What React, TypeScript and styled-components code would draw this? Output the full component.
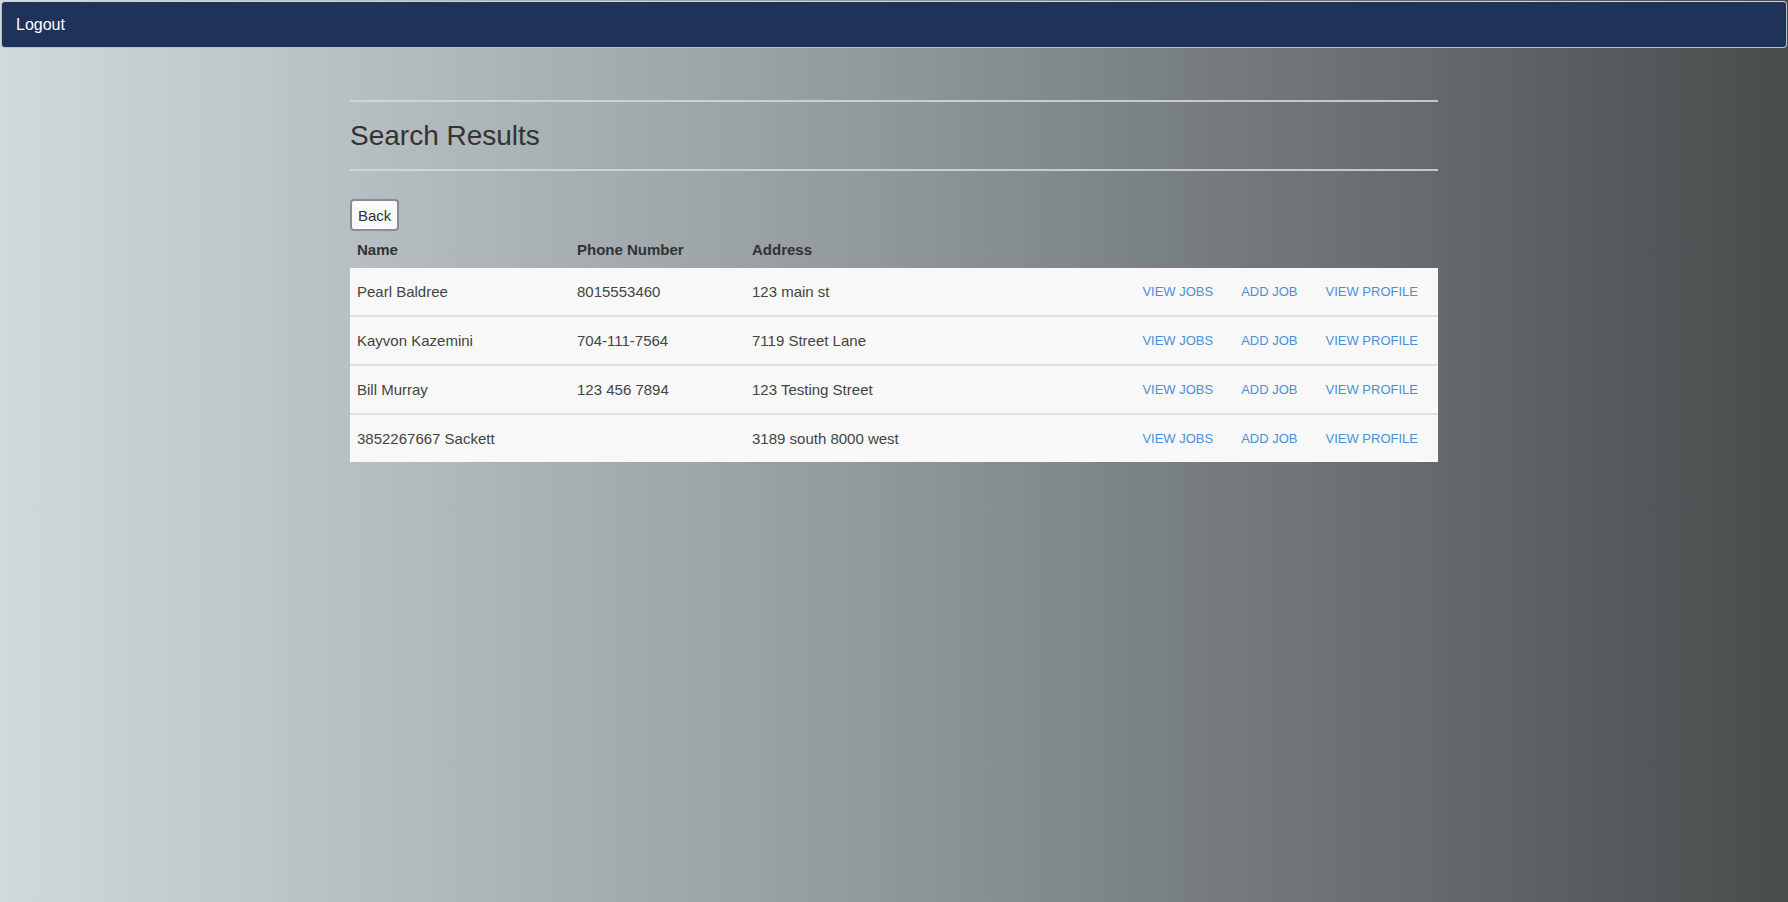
import React from 'react'
import styled, { createGlobalStyle } from 'styled-components';

const GlobalStyle = createGlobalStyle`
html, body {
  margin: 0;
  padding: 0;
  min-height: 100%;
}
body {
  font-family: "Liberation Sans", Arial, sans-serif;
  color: #333;
  background: linear-gradient(to right, #d0d9dc 0%, #8f9799 50%, #494c4d 100%);
  min-height: 902px;
}
`

const Page = styled.div`
min-height: 902px;
padding: 1px;
box-sizing: border-box;
`

const NavBar = styled.nav`
height: 47px;
display: flex;
align-items: center;
padding: 0 14px;
background: #1f3259;
border: 1px solid #b9c0c6;
border-top-color: #cfd6da;
border-radius: 4px;
box-sizing: border-box;
`

const NavLink = styled.a`
color: #fff;
font-size: 16px;
cursor: pointer;
`

const Container = styled.div`
width: 1088px;
margin: 0 auto;
padding-top: 52px;
`

const Rule = styled.div`
height: 2px;
background: #d3d8da;
opacity: .85;
`

const Title = styled.h2`
margin: 17px 0 17px;
font-size: 28px;
line-height: 33px;
font-weight: 400;
color: #333;
`

const BackButton = styled.button`
margin-top: 28px;
height: 32px;
padding: 0 6px;
font-family: inherit;
font-size: 15px;
color: #333;
background: #fafafa;
border: 2px solid #8a8d8f;
border-radius: 4px;
cursor: pointer;
`

const Table = styled.div`
display: flex;
flex-direction: column;
`

const HeadRow = styled.div`
display: grid;
grid-template-columns: 220px 175px 1fr;
align-items: center;
height: 37px;
padding-left: 7px;
font-size: 15px;
font-weight: 700;
color: #2f3336;
`

const Row = styled.div`
display: grid;
grid-template-columns: 220px 175px 1fr auto;
align-items: center;
height: 47px;
padding-left: 7px;
padding-right: 20px;
background: #f8f8f8;
font-size: 15px;
color: #444;
& + & {
  border-top: 2px solid #e1e1e1;
}
`

const Actions = styled.div`
display: flex;
gap: 28px;
`

const ActionLink = styled.a`
font-size: 13px;
text-transform: uppercase;
color: #4a90d9;
cursor: pointer;
`

type Customer = {
  name: string;
  phone: string;
  address: string;
}

const customers: Customer[] = [
  { name: 'Pearl Baldree', phone: '8015553460', address: '123 main st' },
  { name: 'Kayvon Kazemini', phone: '704-111-7564', address: '7119 Street Lane' },
  { name: 'Bill Murray', phone: '123 456 7894', address: '123 Testing Street' },
  { name: '3852267667 Sackett', phone: '', address: '3189 south 8000 west' },
]

const App = () => (
  <>
    <GlobalStyle />
    <Page>
      <NavBar>
        <NavLink>Logout</NavLink>
      </NavBar>
      <Container>
        <Rule />
        <Title>Search Results</Title>
        <Rule />
        <BackButton>Back</BackButton>
        <Table>
          <HeadRow>
            <div>Name</div>
            <div>Phone Number</div>
            <div>Address</div>
          </HeadRow>
          {customers.map((c) => (
            <Row key={c.name}>
              <div>{c.name}</div>
              <div>{c.phone}</div>
              <div>{c.address}</div>
              <Actions>
                <ActionLink>View Jobs</ActionLink>
                <ActionLink>Add Job</ActionLink>
                <ActionLink>View Profile</ActionLink>
              </Actions>
            </Row>
          ))}
        </Table>
      </Container>
    </Page>
  </>
)

export default App;
